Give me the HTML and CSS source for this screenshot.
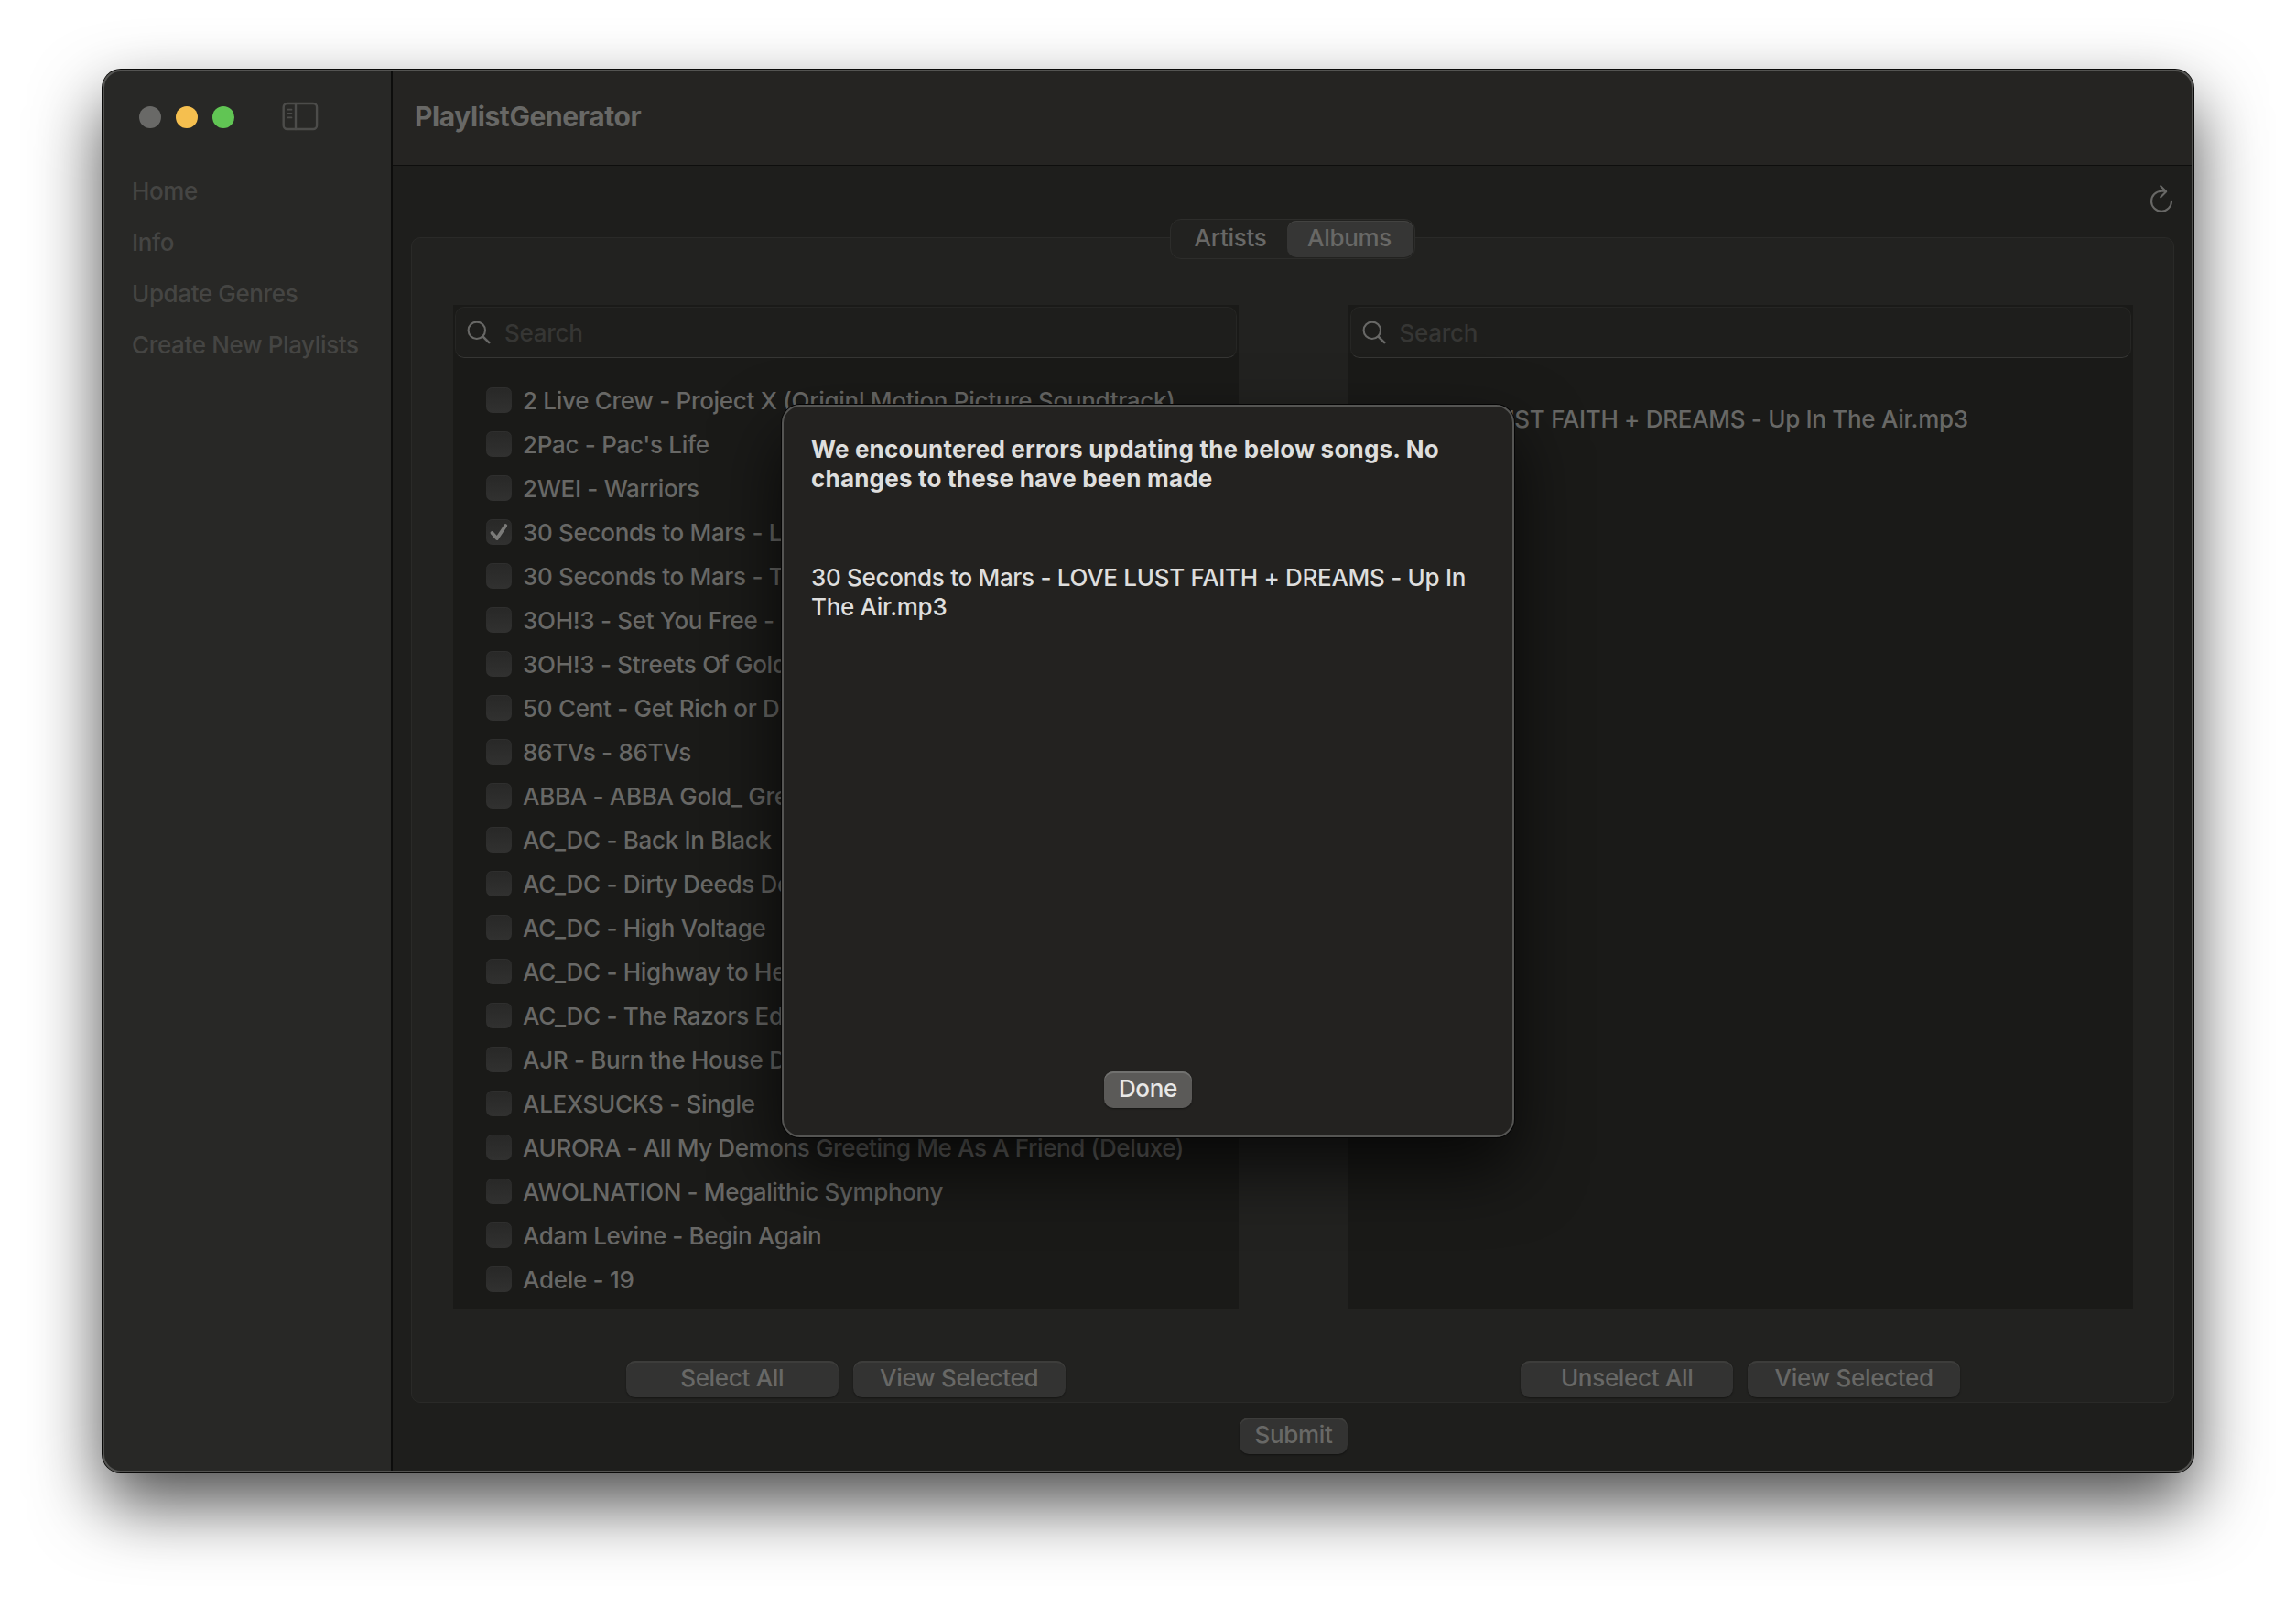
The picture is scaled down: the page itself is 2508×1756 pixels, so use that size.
FILE: index.html
```html
<!DOCTYPE html>
<html lang="en">
<head>
<meta charset="utf-8">
<title>PlaylistGenerator</title>
<link rel="stylesheet" href="styles.css">
</head>
<body>
<div class="window">
  <aside class="sidebar">
    <div class="controls">
      <span class="light light-close"></span><span class="light light-min"></span><span class="light light-max"></span>
      <svg class="toggle" viewBox="0 0 40 32" width="40" height="32" fill="none" stroke="currentColor" stroke-width="2.4" stroke-linecap="round"><rect x="1.7" y="2" width="36.4" height="28" rx="4"/><path d="M15 2v28"/><path d="M6.5 8.7h4M6.5 13h4M6.5 17.4h4" stroke-width="1.8"/></svg>
    </div>
    <nav class="nav">
      <a>Home</a><a>Info</a><a>Update Genres</a><a>Create New Playlists</a>
    </nav>
  </aside>
  <main class="main">
    <header class="titlebar"><h1>PlaylistGenerator</h1></header>
    <div class="toolbar">
      <svg class="refresh" viewBox="0 0 26 32" width="26" height="32" fill="none" stroke="currentColor" stroke-width="2.1" stroke-linecap="round" stroke-linejoin="round"><path d="M24 18.7a11 11 0 1 1-11-11H18M12.2 2.2l6 6-6 6"/></svg>
    </div>
    <section class="group">
      <div class="segments"><span class="segment seg-artists">Artists</span><span class="segment seg-albums">Albums</span></div>
      <div class="panes">
        <div class="pane">
          <div class="list">
            <div class="search"><svg viewBox="0 0 26 26" width="26" height="26" fill="none" stroke="currentColor" stroke-width="2.1" stroke-linecap="round"><circle cx="10.8" cy="10.8" r="9.2"/><path d="M17.6 17.6l6.6 6.6" stroke-width="2.6"/></svg><span>Search</span></div>
            <ul class="rows">
              <li><i class="check"></i><span>2 Live Crew - Project X (Originl Motion Picture Soundtrack)</span></li>
              <li><i class="check"></i><span>2Pac - Pac's Life</span></li>
              <li><i class="check"></i><span>2WEI - Warriors</span></li>
              <li><i class="check"><svg viewBox="0 0 28 28" width="28" height="28" fill="none" stroke="currentColor" stroke-width="3.8" stroke-linecap="round" stroke-linejoin="round"><path d="M6.5 15l5.4 6L21.3 7"/></svg></i><span>30 Seconds to Mars - LOVE LUST FAITH + DREAMS</span></li>
              <li><i class="check"></i><span>30 Seconds to Mars - This Is War</span></li>
              <li><i class="check"></i><span>3OH!3 - Set You Free - Single</span></li>
              <li><i class="check"></i><span>3OH!3 - Streets Of Gold</span></li>
              <li><i class="check"></i><span>50 Cent - Get Rich or Die Tryin'</span></li>
              <li><i class="check"></i><span>86TVs - 86TVs</span></li>
              <li><i class="check"></i><span>ABBA - ABBA Gold_ Greatest Hits</span></li>
              <li><i class="check"></i><span>AC_DC - Back In Black</span></li>
              <li><i class="check"></i><span>AC_DC - Dirty Deeds Done Dirt Cheap</span></li>
              <li><i class="check"></i><span>AC_DC - High Voltage</span></li>
              <li><i class="check"></i><span>AC_DC - Highway to Hell</span></li>
              <li><i class="check"></i><span>AC_DC - The Razors Edge</span></li>
              <li><i class="check"></i><span>AJR - Burn the House Down</span></li>
              <li><i class="check"></i><span>ALEXSUCKS - Single</span></li>
              <li class="tight"><i class="check"></i><span>AURORA - All My Demons Greeting Me As A Friend (Deluxe)</span></li>
              <li class="tight"><i class="check"></i><span>AWOLNATION - Megalithic Symphony</span></li>
              <li class="tight"><i class="check"></i><span>Adam Levine - Begin Again</span></li>
              <li><i class="check"></i><span>Adele - 19</span></li>
            </ul>
          </div>
          <div class="actions"><button>Select All</button><button>View Selected</button></div>
        </div>
        <div class="pane">
          <div class="list">
            <div class="search"><svg viewBox="0 0 26 26" width="26" height="26" fill="none" stroke="currentColor" stroke-width="2.1" stroke-linecap="round"><circle cx="10.8" cy="10.8" r="9.2"/><path d="M17.6 17.6l6.6 6.6" stroke-width="2.6"/></svg><span>Search</span></div>
            <ul class="rows songs">
              <li><i class="check"></i><span>LOVE LUST FAITH + DREAMS - Up In The Air.mp3</span></li>
            </ul>
          </div>
          <div class="actions"><button>Unselect All</button><button>View Selected</button></div>
        </div>
      </div>
    </section>
    <footer class="footer"><button class="submit">Submit</button></footer>
  </main>
  <div class="dialog">
    <h2>We encountered errors updating the below songs. No<br>changes to these have been made</h2>
    <p>30 Seconds to Mars - LOVE LUST FAITH + DREAMS - Up In<br>The Air.mp3</p>
    <button class="done">Done</button>
  </div>
</div>
</body>
</html>
```
FILE: styles.css
```css
* { box-sizing: border-box; }
body {
  margin: 0;
  width: 2508px;
  height: 1756px;
  overflow: hidden;
  background: #fff;
  padding: 76px 112px;
  font: 450 26px/32px Inter, "Liberation Sans", sans-serif;
  letter-spacing: -.3px;
  color: #686866;
}
.window {
  position: relative;
  display: flex;
  width: 2284px;
  height: 1532px;
  border-radius: 20px;
  background: #1e1e1c;
  box-shadow: 0 0 0 1px #0a0a09, 0 34px 76px rgba(0, 0, 0, .7);
}
.window::after {
  content: "";
  position: absolute;
  inset: 0;
  border: 2px solid #545452;
  border-radius: 20px;
  pointer-events: none;
}
.sidebar {
  width: 317px;
  background: #282826;
  border-right: 2px solid #0d0d0c;
  border-radius: 20px 0 0 20px;
}
.controls { display: flex; align-items: center; gap: 16px; height: 104px; padding-left: 40px; }
.light { width: 24px; height: 24px; border-radius: 50%; }
.light-close { background: #696967; }
.light-min { background: #f5bf4f; }
.light-max { background: #61c554; }
.toggle { margin: 0 0 2px 36px; color: #4c4c4a; }
.nav { display: flex; flex-direction: column; padding: 12px 0 0 32px; color: #454543; letter-spacing: -.37px; }
.nav a { height: 56px; line-height: 34px; }
.main { flex: 1; display: flex; flex-direction: column; min-width: 0; }
.titlebar {
  height: 105px;
  border-bottom: 1px solid #0e0e0d;
  border-radius: 0 20px 0 0;
  background: #252422;
  padding: 33px 24px;
}
h1 { margin: 0; font-size: 30px; line-height: 36px; font-weight: 700; letter-spacing: -.4px; }
.toolbar { height: 78px; display: flex; justify-content: flex-end; padding: 20px 22px 0 0; }
.group {
  display: flex;
  flex-direction: column;
  align-items: center;
  width: 1926px;
  height: 1273px;
  margin-left: 20px;
  border: 1px solid #2a2a28;
  border-radius: 10px;
  background: #222220;
}
.segments {
  display: flex;
  justify-content: flex-end;
  width: 268px;
  height: 44px;
  margin-top: -21px;
  padding: 1px;
  border: 1px solid #2d2d2b;
  border-radius: 12px;
  background: #222220;
  flex: none;
}
.segment { height: 40px; line-height: 38px; border-radius: 10px; text-align: center; }
.seg-artists { width: 126px; padding-left: 2px; }
.seg-albums { width: 138px; padding-right: 2px; background: #363635; box-shadow: inset 0 1px #434341; }
.panes { display: flex; align-self: flex-start; gap: 120px; margin: 50px 0 0 45px; width: 1835px; }
.pane { flex: 1; min-width: 0; }
.list { height: 1097px; background: #1a1a18; padding: 2px; overflow: hidden; }
.search {
  display: flex;
  align-items: center;
  gap: 15px;
  height: 56px;
  padding-left: 12px;
  border: 1px solid #262624;
  border-bottom-color: #363634;
  border-radius: 10px;
  background: #1e1e1c;
}
.search span { padding-top: 1px; color: #363634; }
.rows { list-style: none; margin: 0; padding: 22px 0 0 34px; }
.rows li { display: flex; align-items: center; gap: 12px; height: 48px; white-space: nowrap; }
.rows span { padding-top: 2px; }
.rows .tight { letter-spacing: -.38px; }
.songs { padding-top: 42px; }
.check {
  width: 28px;
  height: 28px;
  border-radius: 7px;
  background: linear-gradient(#282827, #313130);
  box-shadow: inset 0 1px #2f2f2e;
  color: #7b7b79;
}
.check svg { display: block; }
.actions { display: flex; justify-content: center; gap: 16px; margin-top: 56px; }
button {
  width: 232px;
  height: 40px;
  padding: 0 0 2px;
  border: 0;
  border-radius: 10px;
  background: #333332;
  box-shadow: inset 0 2px #3d3d3b, 0 1px 2px rgba(0, 0, 0, .4);
  font: inherit;
  letter-spacing: inherit;
  line-height: 36px;
  color: #686866;
}
.footer { display: flex; justify-content: center; padding: 16px 0 0 1px; }
.submit { width: 118px; }
.dialog {
  position: absolute;
  left: 742px;
  top: 366px;
  width: 800px;
  height: 800px;
  display: flex;
  flex-direction: column;
  border: 2px solid #555553;
  border-radius: 20px;
  background: #232220;
  padding: 31px 30px 30px;
  color: #dededd;
  box-shadow: 0 0 0 1px #050505, 0 34px 76px rgba(0, 0, 0, .7);
}
h2 { margin: 0; font-size: 26px; line-height: 32px; font-weight: 750; letter-spacing: .2px; white-space: nowrap; }
p { margin: 76px 0 0; white-space: nowrap; }
.done {
  width: 96px;
  margin: auto auto 0;
  background: #5b5a58;
  color: #e8e8e7;
  box-shadow: inset 0 2px #71716f, 0 1px 2px rgba(0, 0, 0, .4);
}
```
